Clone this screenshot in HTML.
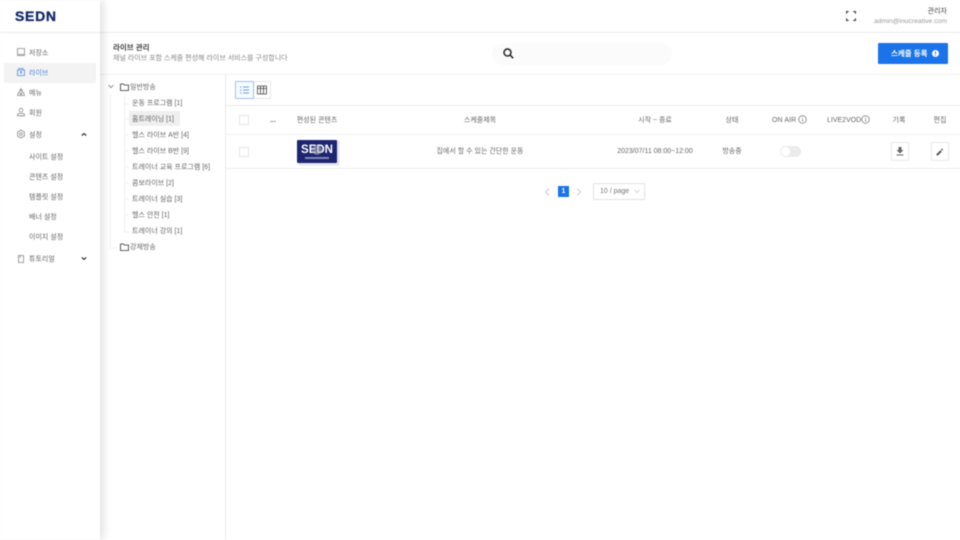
<!DOCTYPE html>
<html lang="ko"><head><meta charset="utf-8"><title>라이브 관리</title>
<style>
*{box-sizing:border-box}
html,body{margin:0;padding:0;width:960px;height:540px;overflow:hidden;background:#fff}
body{font-family:"Liberation Sans","Noto Sans CJK KR",sans-serif;color:#666;font-size:7px;position:relative}
.t,.l,.b,svg.i{position:absolute}
.t{white-space:nowrap;line-height:10px}
.c{transform:translateX(-50%)}
.r{transform:translateX(-100%)}
.l{background:#ebebeb}
svg.i{fill:none;stroke:#888;stroke-width:.8}
#wrap{position:absolute;inset:0;filter:blur(.4px)}
</style></head><body><div id="wrap">
<!-- lines -->
<div class="l" style="left:100px;top:32px;width:860px;height:1px"></div>
<div class="l" style="left:100px;top:74px;width:860px;height:1px;background:#f0f0f0"></div>
<div class="l" style="left:225px;top:75px;width:1px;height:465px"></div>
<div class="l" style="left:226px;top:105px;width:734px;height:1px"></div>
<div class="l" style="left:226px;top:134px;width:734px;height:1px;background:#f0f0f0"></div>
<div class="l" style="left:226px;top:168px;width:734px;height:1px"></div>

<!-- sidebar -->
<div class="b" style="left:0;top:0;width:100px;height:540px;background:#fff;box-shadow:3px 0 8px rgba(0,0,0,.13)"></div>
<div class="l" style="left:0;top:32px;width:100px;height:1px"></div>
<div class="t" style="left:15px;top:8px;font-size:14px;line-height:16px;font-weight:700;color:#14296b;letter-spacing:.7px;-webkit-text-stroke:.3px #14296b">SEDN</div>
<div class="b" style="left:4px;top:63px;width:92px;height:20px;background:#f3f3f3;border-radius:2px"></div>

<svg class="i" style="left:16px;top:47px" width="10" height="10" viewBox="0 0 10 10"><path d="M1.500 1.500h7v6h-7zM1 8.500h8"/></svg>
<div class="t" style="left:29px;top:49px">저장소</div>
<svg class="i" style="left:16px;top:67px;stroke:#4f8bdc" width="10" height="10" viewBox="0 0 10 10"><path d="M1.500 3h7v5.500h-7zM3 3v-1.500h4v1.500M5 7v-2.500M4 5.500l1-1 1 1"/></svg>
<div class="t" style="left:29px;top:69px;color:#4a86d8">라이브</div>
<svg class="i" style="left:16px;top:87px" width="10" height="10" viewBox="0 0 10 10"><path d="M5 1.500l1.500 2.500h-3zM1.500 8.500l1-3h1.500l1 3zM5 8.500l1-3h1.500l1 3z"/></svg>
<div class="t" style="left:29px;top:89px">메뉴</div>
<svg class="i" style="left:16px;top:107px" width="10" height="10" viewBox="0 0 10 10"><circle cx="5" cy="3.200" r="1.800"/><path d="M1.500 8.800v-.8q0-1.500 2-1.500h3q2 0 2 1.500v.8z"/></svg>
<div class="t" style="left:29px;top:109px">회원</div>
<svg class="i" style="left:16px;top:129px" width="10" height="10" viewBox="0 0 10 10"><path d="M5 1l3.400 2v4l-3.400 2-3.400-2v-4z"/><circle cx="5" cy="5" r="1.400"/></svg>
<div class="t" style="left:29px;top:131px">설정</div>
<svg class="i" style="left:81px;top:132px;stroke:#333;stroke-width:1.200" width="6" height="5" viewBox="0 0 6 5"><path d="M.8 3.500l2.200-2 2.200 2"/></svg>
<div class="t" style="left:29px;top:153px">사이트 설정</div>
<div class="t" style="left:29px;top:173px">콘텐츠 설정</div>
<div class="t" style="left:29px;top:193px">템플릿 설정</div>
<div class="t" style="left:29px;top:213px">배너 설정</div>
<div class="t" style="left:29px;top:233px">이미지 설정</div>
<svg class="i" style="left:16px;top:254px" width="10" height="10" viewBox="0 0 10 10"><path d="M2.500 1.500h5v7h-5zM4.200 1.500v2.500"/></svg>
<div class="t" style="left:29px;top:255px">튜토리얼</div>
<svg class="i" style="left:81px;top:256px;stroke:#333;stroke-width:1.200" width="6" height="5" viewBox="0 0 6 5"><path d="M.8 1.500l2.200 2 2.200-2"/></svg>

<!-- top right -->
<svg class="i" style="left:846px;top:11px;stroke:#333;stroke-width:1.100" width="10" height="10" viewBox="0 0 10 10"><path d="M.6 2.600v-2h2M7.400 .6h2v2M9.400 7.400v2h-2M2.600 9.400h-2v-2"/></svg>
<div class="t r" style="left:947px;top:7px;color:#444">관리자</div>
<div class="t r" style="left:947px;top:16.500px;color:#999;font-size:6.800px">admin@inucreative.com</div>

<!-- title -->
<div class="t" style="left:113px;top:43px;font-weight:700;color:#444;font-size:7.500px">라이브 관리</div>
<div class="t" style="left:113px;top:53.500px;color:#888">채널 라이브 포함 스케줄 편성해 라이브 서비스를 구성합니다</div>

<!-- search -->
<div class="b" style="left:492px;top:43px;width:180px;height:22px;border-radius:11px;background:#fbfbfb"></div>
<svg class="i" style="left:503px;top:48px;stroke:#222;stroke-width:1.500" width="11" height="11" viewBox="0 0 11 11"><circle cx="4.500" cy="4.500" r="3.500"/><path d="M7 7l3.200 3.200"/></svg>

<!-- button -->
<div class="b" style="left:878px;top:43px;width:70px;height:21px;background:#1a73e8;border-radius:1px"></div>
<div class="t" style="left:891px;top:49px;color:#fff;font-size:7.500px;font-weight:700">스케줄 등록</div>
<svg class="i" style="left:932px;top:50px;stroke:none;fill:#fff" width="7" height="7" viewBox="0 0 7 7"><circle cx="3.500" cy="3.500" r="3.500"/><path d="M3 1.500h1v2.500h-1zM3 4.700h1v1h-1z" fill="#1a73e8"/></svg>

<!-- tree -->
<svg class="i" style="left:105px;top:80px;stroke:#eee" width="40" height="175" viewBox="0 0 40 175"><path d="M5.500 14v154h6"/><path d="M19.500 14v138h5M19.500 24h5M19.500 39h5M19.500 55h5M19.500 71h5M19.500 87h5M19.500 103h5M19.500 119h5M19.500 135h5"/></svg>
<svg class="i" style="left:108px;top:84px;stroke:#777" width="6" height="5" viewBox="0 0 6 5"><path d="M.5 1l2.500 2.500 2.500-2.500"/></svg>
<svg class="i" style="left:120px;top:83px;stroke:#333" width="9" height="8" viewBox="0 0 9 8"><path d="M.5 1h3l.7 1h4.300v5.500h-8z"/></svg>
<div class="t" style="left:130px;top:83px">일반방송</div>
<div class="t" style="left:132px;top:99px">운동 프로그램 [1]</div>
<div class="b" style="left:129px;top:111px;width:51px;height:15px;background:#efefef"></div>
<div class="t" style="left:132px;top:115px">홈트레이닝 [1]</div>
<div class="t" style="left:132px;top:131px">헬스 라이브 A반 [4]</div>
<div class="t" style="left:132px;top:147px">헬스 라이브 B반 [9]</div>
<div class="t" style="left:132px;top:163px">트레이너 교육 프로그램 [6]</div>
<div class="t" style="left:132px;top:179px">콤보라이브 [2]</div>
<div class="t" style="left:132px;top:195px">트레이너 실습 [3]</div>
<div class="t" style="left:132px;top:211px">헬스 안전 [1]</div>
<div class="t" style="left:132px;top:227px">트레이너 강의 [1]</div>
<svg class="i" style="left:120px;top:243px;stroke:#333" width="9" height="8" viewBox="0 0 9 8"><path d="M.5 1h3l.7 1h4.300v5.500h-8z"/></svg>
<div class="t" style="left:130px;top:243px">강제방송</div>

<!-- view toggle -->
<div class="b" style="left:235px;top:81px;width:19px;height:18px;border:1px solid #9dc1ee;border-radius:1px;background:#f7faff"></div>
<svg class="i" style="left:240px;top:86px;stroke:#3f7fd6" width="9" height="8" viewBox="0 0 9 8"><path d="M0 1h1.500M3 1h6M0 4h1.500M3 4h6M0 7h1.500M3 7h6"/></svg>
<div class="b" style="left:254px;top:81px;width:17px;height:18px;border:1px solid #e6e6e6;border-left:0"></div>
<svg class="i" style="left:257px;top:85px;stroke:#444" width="10" height="10" viewBox="0 0 10 10"><path d="M.5 1h9v8h-9zM.5 3.500h9M3.500 1v8M6.500 1v8"/></svg>

<!-- table head -->
<div class="b" style="left:239px;top:115px;width:10px;height:10px;border:1px solid #e4e4e4;border-radius:1px"></div>
<div class="t c" style="left:273px;top:116px;font-weight:700">...</div>
<div class="t c" style="left:317px;top:116px">편성된 콘텐츠</div>
<div class="t c" style="left:480px;top:116px">스케줄제목</div>
<div class="t c" style="left:655px;top:116px">시작 ~ 종료</div>
<div class="t c" style="left:732px;top:116px">상태</div>
<div class="t" style="left:772px;top:116px;letter-spacing:.1px">ON AIR</div>
<svg class="i" style="left:798px;top:115px;stroke:#666;stroke-width:.7" width="9" height="9" viewBox="0 0 9 9"><circle cx="4.500" cy="4.500" r="3.800"/><path d="M4.500 4v2.800M4.500 2.200v1"/></svg>
<div class="t" style="left:827px;top:116px">LIVE2VOD</div>
<svg class="i" style="left:861px;top:115px;stroke:#666;stroke-width:.7" width="9" height="9" viewBox="0 0 9 9"><circle cx="4.500" cy="4.500" r="3.800"/><path d="M4.500 4v2.800M4.500 2.200v1"/></svg>
<div class="t c" style="left:899px;top:116px">기록</div>
<div class="t c" style="left:940px;top:116px">편집</div>

<!-- row -->
<div class="b" style="left:239px;top:147px;width:10px;height:10px;border:1px solid #e4e4e4;border-radius:1px"></div>
<div class="b" style="left:299px;top:141px;width:40px;height:24px;background:#e6e6ee;border-radius:1px;box-shadow:0 0 1px #999"></div>
<div class="b" style="left:297px;top:140px;width:40px;height:23px;background:#1d2470;border-radius:1px"></div>
<div class="t c" style="left:317px;top:145px;color:#fff;font-size:11.500px;font-weight:700">SEDN</div>
<div class="b" style="left:312px;top:145px;width:10px;height:10px;background:#aab;opacity:.6;border-radius:50%"></div>
<div class="b" style="left:305px;top:157px;width:24px;height:2px;background:#8087b5"></div>
<div class="t c" style="left:480px;top:147px">집에서 할 수 있는 간단한 운동</div>
<div class="t c" style="left:655px;top:147px">2023/07/11 08:00~12:00</div>
<div class="t c" style="left:732px;top:147px">방송중</div>
<div class="b" style="left:780px;top:146px;width:21px;height:11px;border-radius:6px;background:#ebebeb"></div>
<div class="b" style="left:781px;top:147px;width:9px;height:9px;border-radius:50%;background:#fff"></div>
<div class="b" style="left:891px;top:142px;width:18px;height:19px;border:1px solid #eaeaea;border-radius:1px"></div>
<svg class="i" style="left:896px;top:147px;stroke:none;fill:#666" width="8" height="9" viewBox="0 0 8 9"><path d="M2.500 0h3v3h2l-3.500 3.500-3.500-3.500h2zM.5 7.500h7v1h-7z"/></svg>
<div class="b" style="left:931px;top:142px;width:18px;height:19px;border:1px solid #eaeaea;border-radius:1px"></div>
<svg class="i" style="left:936px;top:148px;stroke:none;fill:#555" width="8" height="8" viewBox="0 0 8 8"><path d="M.5 7.500v-1.400l4-4 1.400 1.400-4 4zM5 1.200l.8-.8 1.400 1.400-.8.800z"/></svg>

<!-- pagination -->
<svg class="i" style="left:544px;top:188px;stroke:#bbb" width="6" height="8" viewBox="0 0 6 8"><path d="M5 .5l-3.500 3.500 3.500 3.500"/></svg>
<div class="b" style="left:558px;top:186px;width:11px;height:11px;background:#1a73e8"></div>
<div class="t c" style="left:563.500px;top:187px;color:#fff;font-weight:700;font-size:7px">1</div>
<svg class="i" style="left:576px;top:188px;stroke:#bbb" width="6" height="8" viewBox="0 0 6 8"><path d="M1 .5l3.500 3.500-3.500 3.500"/></svg>
<div class="b" style="left:593px;top:183px;width:52px;height:17px;border:1px solid #e2e2e2;border-radius:1px"></div>
<div class="t" style="left:600px;top:187px;color:#777">10 / page</div>
<svg class="i" style="left:634px;top:189px;stroke:#ccc" width="6" height="5" viewBox="0 0 6 5"><path d="M.5 1l2.500 2.500 2.500-2.500"/></svg>
</div></body></html>
